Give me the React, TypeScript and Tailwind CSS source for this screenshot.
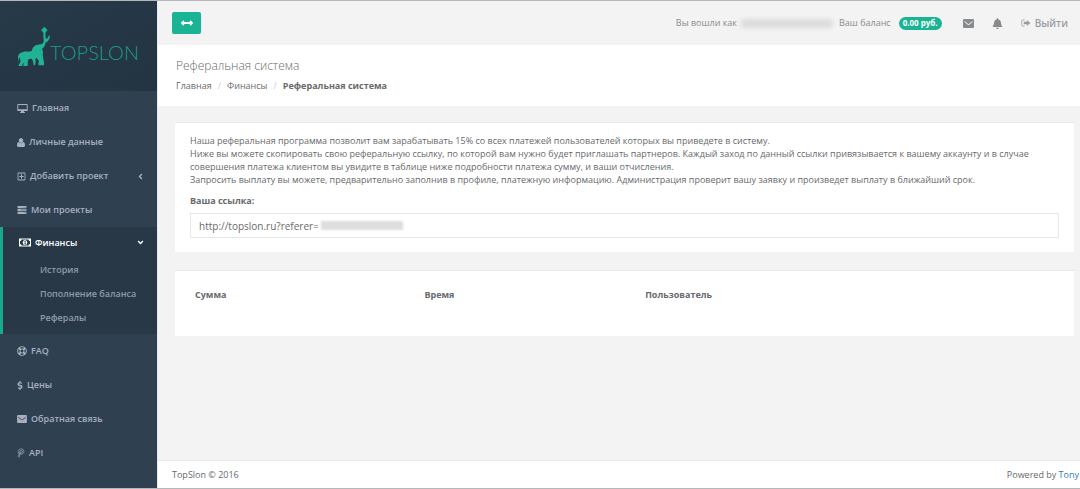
import React, { useState } from 'react';
import {
  FaAngleDown,
  FaAngleLeft,
  FaArrowsAltH,
  FaBell,
  FaDollarSign,
  FaRegLifeRing,
  FaRegPlusSquare,
} from 'react-icons/fa';

interface IconProps {
  className?: string;
}

const DesktopIcon: React.FC<IconProps> = ({ className }) => (
  <svg viewBox="0 0 22 19" className={className} fill="currentColor" aria-hidden="true">
    <path
      fillRule="evenodd"
      d="M2 0h18a2 2 0 0 1 2 2v11a2 2 0 0 1-2 2h-6v2h2v2H6v-2h2v-2H2a2 2 0 0 1-2-2V2a2 2 0 0 1 2-2Zm0 2v9h18V2H2Z"
    />
  </svg>
);

const UserIcon: React.FC<IconProps> = ({ className }) => (
  <svg viewBox="0 0 16 18" className={className} fill="currentColor" aria-hidden="true">
    <ellipse cx="8" cy="5" rx="4.5" ry="5" />
    <path d="M3.5 8C1 8.5 0 11 0 14.5 0 17 1.5 18 3 18h10c1.5 0 3-1 3-3.500C16 11 15 8.500 12.500 8 10 11.500 6 11.500 3.500 8Z" />
  </svg>
);

const MailIcon: React.FC<IconProps> = ({ className }) => (
  <svg viewBox="0 0 22 18" className={className} fill="currentColor" aria-hidden="true">
    <path
      fillRule="evenodd"
      d="M2 0h18a2 2 0 0 1 2 2v14a2 2 0 0 1-2 2H2a2 2 0 0 1-2-2V2a2 2 0 0 1 2-2Zm1 4v2l6.5 5.5a2.3 2.3 0 0 0 3 0L19 6V4l-8 6.5L3 4Z"
    />
  </svg>
);

const TasksIcon: React.FC<IconProps> = ({ className }) => (
  <svg viewBox="0 0 22 18" className={className} fill="currentColor" aria-hidden="true">
    <path
      fillRule="evenodd"
      d="M1 0h20v5H1V0Zm12 2v1h7V2h-7ZM1 6.5h20v5H1v-5Zm7 2v1h12v-1H8ZM1 13h20v5H1v-5Zm14 2v1h5v-1h-5Z"
    />
  </svg>
);

const MoneyIcon: React.FC<IconProps> = ({ className }) => (
  <svg viewBox="0 0 24 18" className={className} aria-hidden="true">
    <path
      fill="currentColor"
      fillRule="evenodd"
      d="M0 1h24v16H0V1Zm5 2a3 3 0 0 1-3 3v6a3 3 0 0 1 3 3h14a3 3 0 0 1 3-3V6a3 3 0 0 1-3-3H5Z"
    />
    <ellipse cx="12" cy="9" rx="4.5" ry="5.2" fill="currentColor" />
    <path d="M10.8 7.2 12.4 6v6M10.6 12h3.4" stroke="#263643" strokeWidth="1.4" fill="none" />
  </svg>
);

const SignOutIcon: React.FC<IconProps> = ({ className }) => (
  <svg viewBox="0 0 22 18" className={className} aria-hidden="true">
    <path d="M8 2H4a2.5 2.5 0 0 0-2.500 2.500v9A2.500 2.500 0 0 0 4 16h4" fill="none" stroke="currentColor" strokeWidth="1.8" />
    <path d="M6 6h7V2l8 7-8 7v-4H6V6Z" fill="currentColor" />
  </svg>
);

const ApiIcon: React.FC<IconProps> = ({ className }) => (
  <svg
    viewBox="0 0 18 22"
    className={className}
    fill="none"
    stroke="currentColor"
    strokeWidth="1.5"
    strokeLinecap="round"
    aria-hidden="true"
  >
    <path d="M4.500 13C1.500 10 1.500 5 5 2.800 9 .5 15.500 2 15.500 7c0 5-3.500 7.500-6.500 6.500" />
    <path d="M7 10.500C5 8 6.500 5 9.200 5c3 0 3.600 3 2.300 5-1 1.600-2.500 1.200-3 0L4.500 20.500 3 19l3.500-10" />
  </svg>
);

const ElephantLogo: React.FC<IconProps> = ({ className }) => (
  <svg viewBox="18 12 96 120" className={className} fill="currentColor" aria-hidden="true">
    <path d="M97 14 107 25l-4 2v4H91v-4l-4-2L97 14Z" />
    <path d="M94 30h7l-1 8c2 6 0 9 2 12 5 0 6-4 8-8l4-2c0 12-6 19-14 23 0 7-4 13-10 18 3 5 4 11 2 17l2 12 2 10v10H80l-1-6 2-6-7-10-4 2 1 10-2 10h-4l-2-12-4-8-10 2-2 10v10l-2 5H33l1-8 3-7-5 4-3 9-1 4H18l2-10 6-11-4-12c-4 4-1 10-4 14-3-10 0-22 6-26 8-6 18-6 27-5l9-3c1-10 8-17 18-18l9-1c7-2 9-8 8-15l-1-10Z" />
  </svg>
);

const menuTop = [
  { label: 'Главная', icon: <DesktopIcon className="h-[9px] w-[11px] shrink-0" /> },
  { label: 'Личные данные', icon: <UserIcon className="h-[9px] w-2 shrink-0" /> },
  { label: 'Добавить проект', icon: <FaRegPlusSquare size={9} />, expandable: true },
  { label: 'Мои проекты', icon: <TasksIcon className="h-[8px] w-[10px] shrink-0" /> },
];

const menuFinance = ['История', 'Пополнение баланса', 'Рефералы'];

const menuBottom = [
  { label: 'FAQ', icon: <FaRegLifeRing size={10} /> },
  { label: 'Цены', icon: <FaDollarSign size={9} className="w-[6px]" /> },
  { label: 'Обратная связь', icon: <MailIcon className="h-[8px] w-[10px] shrink-0" /> },
  { label: 'API', icon: <ApiIcon className="h-[10px] w-[8px] shrink-0" /> },
];

interface MenuItemProps {
  label: string;
  icon: React.ReactNode;
  expandable?: boolean;
}

const MenuItem: React.FC<MenuItemProps> = ({ label, icon, expandable }) => (
  <li>
    <a href="#" className="flex h-[34px] items-center gap-1 pr-3 pl-[17px] hover:text-white">
      {icon}
      <span>{label}</span>
      {expandable && <FaAngleLeft size={9} className="ml-auto" />}
    </a>
  </li>
);

const Sidebar: React.FC = () => (
  <aside className="flex w-[157px] shrink-0 flex-col bg-[#2f4050] text-[9px] font-semibold text-[#a7b1c2]">
    <a
      href="#"
      aria-label="TOPSLON"
      className="flex h-[90px] items-center bg-linear-to-br from-[#263a48] via-[#253746] to-[#233442] pl-[18px] text-[#1fb394]"
    >
      <ElephantLogo className="h-10 w-8 shrink-0" />
      <span className="pt-[11px] font-['Lato'] text-[20px] leading-6 font-light text-[#1e9a84]">TOPSLON</span>
    </a>

    <nav>
      <ul>
        {menuTop.map((item) => (
          <MenuItem key={item.label} {...item} />
        ))}
        <li className="border-l-3 border-[#19aa8d] bg-[#293846] pb-1">
          <a href="#" className="flex h-[31px] items-center gap-1 pr-3 pl-4 text-white">
            <MoneyIcon className="h-[9px] w-[12px] shrink-0" />
            <span>Финансы</span>
            <FaAngleDown size={9} className="ml-auto" />
          </a>
          <ul className="text-[#8f9bab]">
            {menuFinance.map((label) => (
              <li key={label}>
                <a href="#" className="flex h-6 items-center pl-[37px] hover:text-white">
                  {label}
                </a>
              </li>
            ))}
          </ul>
        </li>
        {menuBottom.map((item) => (
          <MenuItem key={item.label} {...item} />
        ))}
      </ul>
    </nav>
  </aside>
);

const TopBar: React.FC = () => (
  <header className="flex h-11 shrink-0 items-center pr-3 pl-3.5 text-[9px] text-[#888b8d]">
    <button
      type="button"
      aria-label="Свернуть меню"
      className="flex h-[22px] w-[29px] items-center justify-center rounded-xs bg-[#1ab394] text-white"
    >
      <FaArrowsAltH size={12} />
    </button>
    <div className="ml-auto flex items-center">
      <span>Вы вошли как</span>
      <span className="mr-1.5 ml-1 h-[9px] w-[92px] rounded-sm bg-[#dcdcdd] blur-[2px]" />
      <span>Ваш баланс</span>
      <span className="ml-2 flex h-[13px] items-center rounded-full bg-[#1ab394] px-1 text-[8px] font-bold text-white">
        0.00 руб.
      </span>
      <a href="#" aria-label="Сообщения" className="ml-[21px]">
        <MailIcon className="h-[9px] w-[11px] shrink-0" />
      </a>
      <a href="#" aria-label="Уведомления" className="ml-[18px]">
        <FaBell size={11} />
      </a>
      <a href="#" className="ml-[18px] flex items-center gap-1 text-[10px] font-semibold text-[#9a9c9e]">
        <SignOutIcon className="h-[8px] w-[10px] shrink-0" />
        Выйти
      </a>
    </div>
  </header>
);

const PageHeading: React.FC = () => (
  <div className="h-[61px] shrink-0 bg-white px-[18px] pt-[13px]">
    <h2 className="text-[12px] leading-4 font-light">Реферальная система</h2>
    <ol className="mt-1 flex text-[9px] leading-4">
      <li>
        <a href="#">Главная</a>
        <span className="px-1.5 text-[#cccccc]">/</span>
      </li>
      <li>
        <a href="#">Финансы</a>
        <span className="px-1.5 text-[#cccccc]">/</span>
      </li>
      <li className="font-bold">Реферальная система</li>
    </ol>
  </div>
);

const ReferralInfo: React.FC = () => {
  const [link, setLink] = useState('http://topslon.ru?referer=');

  return (
    <section className="border-t border-[#e7eaec] bg-white px-[15px] pt-[11px] pb-3.5">
      <p className="text-[9px] leading-[13px]">
        Наша реферальная программа позволит вам зарабатывать 15% со всех платежей пользователей которых вы приведете в
        систему.
        <br />
        Ниже вы можете скопировать свою реферальную ссылку, по которой вам нужно будет приглашать партнеров. Каждый
        заход по данный ссылки привязывается к вашему аккаунту и в случае совершения платежа клиентом вы увидите в
        таблице ниже подробности платежа сумму, и ваши отчисления.
        <br />
        Запросить выплату вы можете, предварительно заполнив в профиле, платежную информацию. Администрация проверит
        вашу заявку и произведет выплату в ближайший срок.
      </p>
      <label htmlFor="ref-link" className="mt-2 block text-[9px] leading-[13px] font-bold">
        Ваша ссылка:
      </label>
      <div className="relative mt-1.5">
        <input
          id="ref-link"
          type="text"
          value={link}
          onChange={(e) => setLink(e.target.value)}
          className="block h-[25px] w-full border border-[#e5e6e7] bg-white px-2 text-[10px] outline-none"
        />
        {/* hidden referer code */}
        <span className="absolute top-2 left-[131px] h-[9px] w-[82px] bg-[#dededf] blur-[1px]" />
      </div>
    </section>
  );
};

const ReferralTable: React.FC = () => (
  <section className="mt-[18px] border-t border-[#e7eaec] bg-white px-[15px] pt-3.5 pb-8">
    <table className="w-full table-fixed text-left text-[9px] leading-[13px]">
      <thead>
        <tr>
          <th className="w-[26.4%] px-[5px] py-[3px] font-bold">Сумма</th>
          <th className="w-[25.4%] px-[5px] py-[3px] font-bold">Время</th>
          <th className="px-[5px] py-[3px] font-bold">Пользователь</th>
        </tr>
      </thead>
      <tbody />
    </table>
  </section>
);

export default function App() {
  return (
    <div className="flex min-h-screen border-y border-[#b5b8ba] bg-[#f3f3f4] font-['Open_Sans',sans-serif] text-[#676a6c]">
      <Sidebar />
      <div className="flex min-w-0 flex-1 flex-col border-l border-[#e4ebf2]">
        <TopBar />
        <PageHeading />
        <main className="flex-1 pt-4 pr-1.5 pb-5 pl-[17px]">
          <ReferralInfo />
          <ReferralTable />
        </main>
        <footer className="flex h-7 shrink-0 items-center justify-between border-t border-[#e7eaec] bg-white pr-px pl-3.5 text-[9px]">
          <span>TopSlon © 2016</span>
          <span>
            Powered by{' '}
            <a href="#" className="text-[#337ab7]">
              Tony
            </a>
          </span>
        </footer>
      </div>
    </div>
  );
}
